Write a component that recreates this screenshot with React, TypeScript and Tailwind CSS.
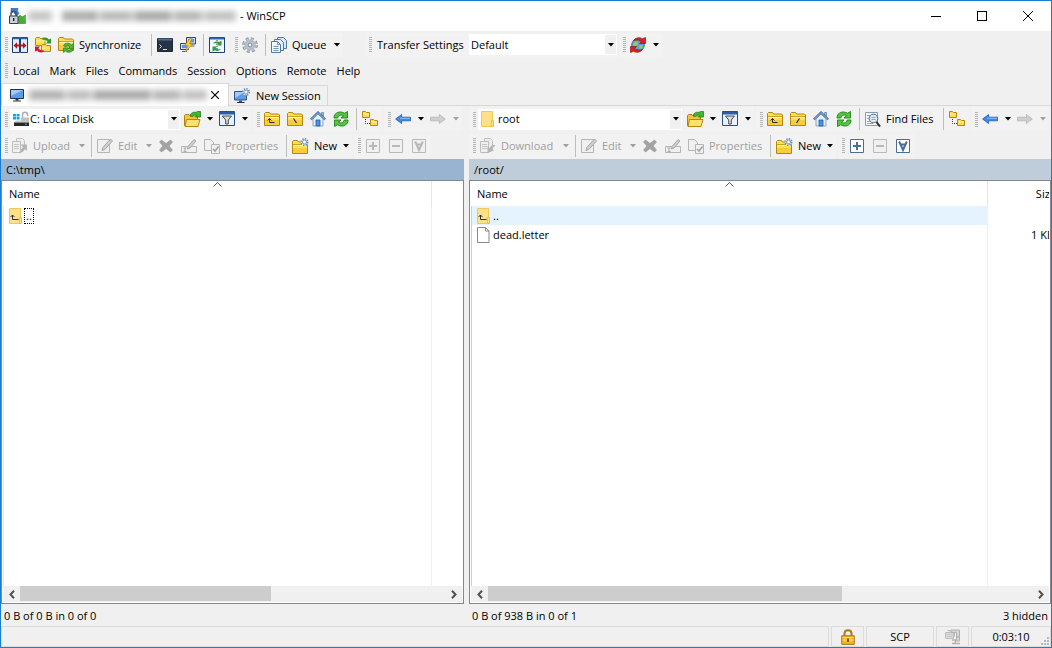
import type { ReactNode } from 'react'

type IconProps = { children: ReactNode; w?: number }

function Svg({ children, w = 16 }: IconProps) {
  return (
    <svg width={w} height="16" viewBox={`0 0 ${w} 16`} fill="none" className="shrink-0" aria-hidden="true">
      {children}
    </svg>
  )
}

// shared folder shape used by most toolbar icons
function Folder({ x = 0, y = 0, children }: { x?: number; y?: number; children?: ReactNode }) {
  return (
    <g transform={`translate(${x} ${y})`}>
      <path d="M.5 14.5v-12l1-1h4l1 1.5h8l1 1v10.5z" fill="#fbdf5e" stroke="#b8860b" />
      <path d="M1 9h14v5H1z" fill="#f6cd3c" />
      <path d="M1.500 6.500h13" stroke="#fff6c0" />
      <path d="M1 5.500h14" stroke="#d0a020" />
      {children}
    </g>
  )
}

const FolderUp = () => (
  <Svg>
    <Folder>
      <path d="M5.500 7.500v4h5M3.500 9.500l2-2 2 2" stroke="#2b2b2b" />
    </Folder>
  </Svg>
)
const FolderRoot = ({ slash }: { slash: string }) => (
  <Svg>
    <Folder>
      <path d={slash === '/' ? 'M9.500 7.500l-3 4.500' : 'M6.500 7.500l3 4.500'} stroke="#2b2b2b" strokeWidth="1.200" />
    </Folder>
  </Svg>
)
const SmallFolder = ({ x, y }: { x: number; y: number }) => (
  <g transform={`translate(${x} ${y})`}>
    <path d="M.5 6.500v-6h3l1 1h3v5z" fill="#fbdc55" stroke="#b8860b" />
    <path d="M1 3h6" stroke="#fff2a8" />
  </g>
)
const Tree = () => (
  <Svg>
    <SmallFolder x={0} y={0} />
    <SmallFolder x={8} y={8} />
    <path d="M3.500 8v4.500H8" stroke="#333" strokeDasharray="1 1" />
  </Svg>
)
const Home = () => (
  <Svg>
    <path d="M3 7.500v7.500h10V7.500L8 3z" fill="#e3effa" stroke="#8aa3bd" />
    <path d="M11.500 1.500h2v4l-2-2z" fill="#9db9d8" stroke="#4a6f9e" strokeWidth=".6" />
    <path d="M.8 8.500L8 1.500l7.200 7" stroke="#3f689c" strokeWidth="2.200" />
    <path d="M1.200 8.200L8 1.700l6.800 6.500" stroke="#a9c6e6" strokeWidth=".9" />
    <path d="M6 9h4v6H6z" fill="#4c8fe6" stroke="#245aa8" strokeWidth=".8" />
  </Svg>
)
const Refresh = () => (
  <Svg>
    <path d="M1 7C1 2.500 5 .2 9 1.200l2.500 1L14.500.5V7H8l2.500-2.300C8 3.500 5.500 4 4.800 7z" fill="#52c73f" stroke="#21801a" strokeWidth=".9" />
    <path d="M15 9c0 4.500-4 6.800-8 5.800l-2.500-1-3 1.700V9H8l-2.500 2.300C8 12.500 10.500 12 11.200 9z" fill="#52c73f" stroke="#21801a" strokeWidth=".9" />
  </Svg>
)
const OpenFolder = () => (
  <Svg w={17}>
    <path d="M.5 14.500v-10l1-1h3.500l1.500 1.500h7v9.500z" fill="#f0c63a" stroke="#b08010" />
    <path d="M1 15.500l1.500-7h13.500l-2 7z" fill="#fde272" stroke="#b8860b" />
    <path d="M6 5c.5-3 3.500-4.500 6-3.500L13.500.3l3 .2v5.500h-5l1.500-1.500c-2-.8-3.500-.5-4.500 1z" fill="#43b834" stroke="#21801a" strokeWidth=".8" />
  </Svg>
)
const Filter = () => (
  <Svg>
    <path d="M.5.500h15v14H.5z" fill="#e9f1fb" stroke="#274f8a" />
    <path d="M1 1h14v2.500H1z" fill="#2a5caa" />
    <path d="M3.500 5h9L9.300 9v4H6.700V9z" fill="#d8dce0" stroke="#4d4d4d" />
  </Svg>
)
const BackArrow = () => (
  <Svg>
    <path d="M.6 8l6-4.500v2.700h8.900v3.600H6.600v2.700z" fill="#3f8bea" stroke="#1e5db3" strokeWidth=".8" />
    <path d="M5 7.300h10" stroke="#8dbcf5" />
  </Svg>
)
const ForwardArrow = () => (
  <Svg>
    <path d="M15.400 8l-6-4.500v2.700H.5v3.600h8.900v2.700z" fill="#cfcfcf" stroke="#b5b5b5" strokeWidth=".8" />
  </Svg>
)
const Boxed = ({ kind, disabled }: { kind: 'plus' | 'minus' | 'all'; disabled?: boolean }) => {
  const c = disabled ? '#b8b8b8' : '#4a6d9c'
  return (
    <Svg>
      <path d="M1.500 1.500h13v13h-13z" fill={disabled ? '#f0f0f0' : '#fff'} stroke={c} />
      {kind !== 'all' && <path d="M4 8h8" stroke={c} strokeWidth="2" />}
      {kind === 'plus' && <path d="M8 4v8" stroke={c} strokeWidth="2" />}
      {kind === 'all' && <path d="M4.200 3.500L8 12l3.800-8.500M5.500 6.500h5" stroke={c} strokeWidth="2" />}
    </Svg>
  )
}
const Gear = () => (
  <Svg>
    <circle cx="8" cy="8" r="6.300" stroke="#7e8b98" strokeWidth="3" strokeDasharray="2.800 2.150" />
    <circle cx="8" cy="8" r="6.300" stroke="#b9c3cd" strokeWidth="1.500" strokeDasharray="2.800 2.150" />
    <circle cx="8" cy="8" r="4.300" fill="#c8d0d8" stroke="#b4bec8" strokeWidth="2.500" />
    <circle cx="8" cy="8" r="2" fill="#f0f0f0" stroke="#76828f" />
  </Svg>
)
const TinyGear = ({ x, y }: { x: number; y: number }) => (
  <g transform={`translate(${x} ${y})`}>
    <circle cx="4" cy="4" r="3.200" stroke="#6487b0" strokeWidth="1.600" strokeDasharray="1.300 1.200" />
    <circle cx="4" cy="4" r="2" fill="#f3f7fb" stroke="#7d9cc0" />
  </g>
)
const NewFolder = () => (
  <Svg w={17}>
    <Folder y={1} />
    <circle cx="12.500" cy="4" r="3.500" fill="#f0f0f0" />
    <TinyGear x={8.500} y={0} />
  </Svg>
)
const Monitor = () => (
  <Svg>
    <path d="M1.500 2.500h13v9h-13z" fill="#5b9bea" stroke="#24303f" />
    <path d="M2 3h12L2 9z" fill="#a3caf7" />
    <path d="M6.500 12h3v1.500h-3z" fill="#24303f" />
    <path d="M4 14h8" stroke="#24303f" />
  </Svg>
)
const NewSessionIcon = () => (
  <Svg>
    <path d="M.5 3.500h12v8.500H.5z" fill="#5b9bea" stroke="#33557f" />
    <path d="M1 4h10L1 10z" fill="#a3caf7" />
    <path d="M5 12.500h3v1.500H5z" fill="#33557f" />
    <path d="M3 14.500h7.500" stroke="#24303f" />
    <circle cx="12" cy="4" r="3.600" fill="#f0f0f0" />
    <TinyGear x={8} y={0} />
  </Svg>
)
const Compare = () => (
  <Svg>
    <path d="M.5.500h7v15h-7zM8.500.500h7v15h-7z" fill="#dfecfb" stroke="#1f3f6e" />
    <path d="M1 1.500h6M9 1.500h6" stroke="#2f67b5" strokeWidth="1.500" />
    <path d="M1.500 8.500L5 5.200v2.300h6V5.200l3.500 3.300L11 11.800V9.500H5v2.300z" fill="#b3151b" />
  </Svg>
)
const SyncBrowse = () => (
  <Svg>
    <path d="M.5 8.500v-7l1-1h3l1 1h4.500v7z" fill="#fbdc55" stroke="#b8860b" />
    <path d="M1 4h9" stroke="#fff2a8" />
    <path d="M6.500 14.500v-6l1-1h3l1 1h4v6z" fill="#fbdc55" stroke="#b8860b" />
    <path d="M7 11h8" stroke="#fff2a8" />
    <path d="M7.500 1c3-1.200 5.500 0 6.200 1.500L16 1.500V6.500h-5l1.500-1.800C11.500 3 10 2.500 7.500 3z" fill="#2d9a2b" />
    <path d="M8.500 15c-3 1.200-5.500 0-6.200-1.500L0 14.500V9.500h5l-1.500 1.800c1 1.700 2.500 2.200 5 1.700z" fill="#cf1d1d" />
  </Svg>
)
const Synchronize = () => (
  <Svg>
    <Folder y={-1} />
    <path d="M5.500 8.500c1.500-3 6-3 8-.5l2-1.500v5h-5l1.500-1.500c-1.500-1.300-3-1.500-4.500 0z" fill="#4cb83c" stroke="#21801a" strokeWidth=".7" />
    <path d="M15.500 12.500c-1.500 3.200-6 3.500-8 1.500L5.500 15.500V11h5L9 12.500c1.500 1.200 3 .8 4 0z" fill="#4cb83c" stroke="#21801a" strokeWidth=".7" />
  </Svg>
)
const Terminal = () => (
  <Svg>
    <path d="M.5 1.500h15v13H.5z" fill="#273445" stroke="#1c2836" />
    <path d="M1 2.500h14" stroke="#4f6e92" strokeWidth="2" />
    <path d="M2.500 7.500l2 2-2 2M6 12.500h4" stroke="#d5dde6" />
  </Svg>
)
const Putty = () => (
  <Svg>
    <path d="M6.500.500h9v6.500h-9zM.5 6.500h8v6h-8z" fill="#cfe0f3" stroke="#34455a" />
    <path d="M8 2h6v3.500H8zM2 8h5v3H2z" fill="#5f97dd" />
    <path d="M2 14.500h5M10.500 9h4" stroke="#53606e" />
    <path d="M10.500 1L4.500 8.500H8L5.500 15l7-8H9.500l2.500-6z" fill="#ffd42e" stroke="#b98310" strokeWidth=".7" />
  </Svg>
)
const KeepUpToDate = () => (
  <Svg>
    <path d="M.5.500h15v15H.5z" fill="#f4f9ff" stroke="#1f3f6e" />
    <path d="M1 1.500h14" stroke="#2f67b5" strokeWidth="2" />
    <path d="M8 3v12" stroke="#1f3f6e" strokeDasharray="1 1" />
    <path d="M4 6.500c1.500-2 4-2.500 6-1.500l2.500-1.500v5H8l1.500-1.500C8 6 6 6 4 6.500z" fill="#2f9e35" />
    <path d="M12 12c-1.500 2-4 2.200-6 1.200l-2.500 1.300V9.500H8L6.500 11c1.500 1.300 3.500 1.500 5.500 1z" fill="#2f9e35" />
  </Svg>
)
const QueueIcon = () => (
  <Svg>
    <path d="M6.500.500h6l3 3v8h-9z" fill="#d9e8f8" stroke="#54779f" />
    <path d="M3.500 2.500h6l3 3v8h-9z" fill="#e4effa" stroke="#54779f" />
    <path d="M.5 4.500h6l3 3v8h-9z" fill="#f4f9ff" stroke="#54779f" />
    <path d="M6.500 4.500v3h3M2.500 9.500h5M2.500 11.500h5M2.500 13.500h5" stroke="#6e93bd" />
  </Svg>
)
const Reconnect = () => (
  <Svg>
    <circle cx="8" cy="8" r="6.300" fill="#5d9fe4" stroke="#3a70b0" />
    <path d="M3.500 6c1-1.500 3-2 4-1s0 3-1 3.500S4 11 3 10zM9 9c2-1.500 4-1 4 .5S11 12.500 10 12.500z" fill="#86cf70" />
    <path d="M3.500 3.500C6 .2 10 .2 12.500 1.800L15.500.500V6.500h-6L11.500 4.500C9.500 3 7 2.500 3.500 3.500z" fill="#d8231f" stroke="#8e1512" strokeWidth=".7" />
    <path d="M12.500 12.500C10 15.800 6 15.800 3.500 14.200L.5 15.500V9.500h6L4.500 11.500c2 1.500 4.500 2 8 1z" fill="#d8231f" stroke="#8e1512" strokeWidth=".7" />
  </Svg>
)
const Drive = () => (
  <Svg>
    <path d="M0 3h3v2.500H0zM3.600 3h3v2.500h-3zM0 6h3v2.500H0zM3.600 6h3v2.500h-3z" fill="#11a4e6" />
    <path d="M9.500 7V3.500c0-3 5-3 5 0V5" stroke="#a7adb3" strokeWidth="1.500" />
    <path d="M8 6.500h8V11H8z" fill="#bcc2c8" />
    <path d="M3 9.500h10l3 2H1z" fill="#c5c9cd" />
    <path d="M1 11.500h15v3.500H1z" fill="#26292c" />
    <path d="M12 13.200h2" stroke="#39d353" />
  </Svg>
)
const PlainFolder = ({ up }: { up?: boolean }) => (
  <svg width="13" height="16" viewBox="0 0 13 16" fill="none" className="shrink-0" aria-hidden="true">
    <path d="M.5.500h11v15H.5z" fill="#ffe08a" stroke="#f0c955" />
    <path d="M10.500 9.500h2v6h-2z" fill="#ffe391" stroke="#ebc145" />
    {up && <path d="M3.500 7v4.500h6M1.500 9l2-2 2 2" stroke="#333" />}
  </svg>
)
const FileIcon = () => (
  <svg width="13" height="16" viewBox="0 0 13 16" fill="none" className="shrink-0" aria-hidden="true">
    <path d="M.5.500h8l3.500 3.500v11.500H.5z" fill="#fff" stroke="#8a8a8a" />
    <path d="M8.500.500v3.500H12" stroke="#8a8a8a" />
  </svg>
)
const Transfer = ({ down }: { down?: boolean }) => (
  <Svg>
    <path d="M4.500.500h6l2 2v9h-8z" fill="#ededed" stroke="#c2c2c2" />
    <path d="M.5 3.500h8v11h-8z" fill="#f0f0f0" stroke="#bcbcbc" />
    <path d="M2 6.500h5M2 8.500h5M2 10.500h5" stroke="#c6c6c6" />
    {down ? (
      <path d="M15.500 7.500L12 10.500l2 2-6.500 2.500V8l2 2 3-3.500z" fill="#b5b5b5" />
    ) : (
      <path d="M8.500 6.500H15v6.500l-2-2c-1 2-3 3.800-6 4.500 1.500-2 2.500-4.500 4-6.500z" fill="#b5b5b5" />
    )}
  </Svg>
)
const Edit = () => (
  <Svg>
    <path d="M.5 1.500h12v13H.5z" fill="#f0f0f0" stroke="#b5b5b5" />
    <path d="M5 12.500l.8-3L13.500 1l2 2-7.700 8.500z" fill="#cfcfcf" stroke="#a9a9a9" />
  </Svg>
)
const Delete = () => (
  <Svg>
    <path d="M1.500 4l2-2L8 5.500 12.500 2l2 2L11 8l3.500 4-2 2L8 10.500 3.500 14l-2-2L5 8z" fill="#a3a3a3" stroke="#949494" strokeWidth=".6" />
  </Svg>
)
const Rename = () => (
  <Svg>
    <path d="M.5 8.500h15v6H.5z" fill="#f0f0f0" stroke="#b5b5b5" />
    <path d="M2.500 10h3M2.500 13.500h3M4 10v3.500" stroke="#a9a9a9" />
    <path d="M6.500 11l.5-2.500 6-7 2 1.500-6 7z" fill="#cfcfcf" stroke="#a9a9a9" />
  </Svg>
)
const Properties = () => (
  <Svg>
    <path d="M.5 1.500h6l3 3v8h-9z" fill="#f0f0f0" stroke="#b5b5b5" />
    <path d="M7.500 6.500h8v9h-8z" fill="#f0f0f0" stroke="#b5b5b5" />
    <path d="M9 11l2 2 3.500-4.500" stroke="#a3a3a3" strokeWidth="1.600" />
  </Svg>
)
const Find = () => (
  <Svg>
    <path d="M.5 1.500h12v13H.5z" fill="#f4f9ff" stroke="#7d9cc0" />
    <path d="M2 4.500h3M2 7.500h2M2 10.500h3M2 12.500h6" stroke="#8aa8cc" />
    <circle cx="8.500" cy="7.500" r="4.300" fill="#dcebf9" stroke="#5c6b7a" />
    <path d="M6.500 6.500h4M6.500 8.500h4" stroke="#89a9cf" />
    <path d="M11.500 11l3.500 4.500" stroke="#2d2d2d" strokeWidth="2" />
  </Svg>
)
const AppIcon = () => (
  <Svg w={17}>
    <path d="M2 .3h7L8.500 3 10 5.500 7.500 8 4.500 4 2 5z" fill="#2f7fd6" stroke="#1a4f94" strokeWidth=".5" />
    <path d="M8 11l3-4 2 2 3.500-2v8.500H8l2-2z" fill="#45b02f" stroke="#1f6b14" strokeWidth=".5" />
    <path d="M2 8V6c0-3.500 5-3.500 5 0v2" stroke="#4a5058" strokeWidth="1.400" />
    <path d="M.5 8h8.500v7.500H.5z" fill="#c9d0d8" stroke="#39424c" />
    <path d="M4.700 10v3" stroke="#20262c" strokeWidth="1.400" />
  </Svg>
)
const Padlock = () => (
  <Svg w={14}>
    <path d="M3.500 7V4.500c0-4.500 7-4.500 7 0V7" stroke="#b07a10" strokeWidth="2" />
    <path d="M.8 6.800h12.400v8.500H.8z" fill="#f5b82e" stroke="#a8700b" />
    <path d="M1.500 8.500h11M1.500 11h11" stroke="#ffdc78" />
    <path d="M7 9.500v3.500" stroke="#5c3c05" strokeWidth="1.500" />
  </Svg>
)
const Clamp = () => (
  <Svg>
    <path d="M.5 3.500h8v6h-8zM2.500 1.500h7v6" stroke="#bdbdbd" fill="#dcdcdc" />
    <path d="M1.500 5.500h6M1.500 7.500h6" stroke="#c6c6c6" />
    <path d="M6 1h8.500v7h-3V3.500H6z" fill="#d4d4d4" stroke="#b2b2b2" />
    <path d="M11.500 8h3v4h-3z" fill="#d4d4d4" stroke="#b2b2b2" />
    <path d="M7 11h5M7 14.500h8M10.500 11v3" stroke="#b2b2b2" strokeWidth="1.500" />
  </Svg>
)

function Caret({ muted }: { muted?: boolean }) {
  return (
    <svg width="6" height="4" viewBox="0 0 6 4" className="shrink-0" aria-hidden="true">
      <path d="M0 0h6L3 3.500z" fill={muted ? '#a0a0a0' : '#000'} />
    </svg>
  )
}

const Grip = () => (
  <div className="flex w-2 shrink-0 flex-col gap-px pl-1">
    {[0, 1, 2, 3, 4, 5, 6, 7].map((i) => (
      <i key={i} className="h-px w-[3px] bg-[#b4b4b4]" />
    ))}
  </div>
)

const Sep = () => <div className="mr-0.5 ml-[3px] h-[22px] w-px shrink-0 bg-[#bdbdbd]" />

type BtnProps = { icon: ReactNode; label: string; text?: boolean; drop?: boolean; disabled?: boolean; className?: string }

function Btn({ icon, label, text, drop, disabled, className = 'w-[23px]' }: BtnProps) {
  return (
    <button
      type="button"
      aria-label={label}
      disabled={disabled}
      className={`flex h-6 shrink-0 items-center pl-[3px] whitespace-nowrap hover:bg-[#e5f1fb] disabled:text-[#a0a0a0] ${className}`}
    >
      {icon}
      {text && <span className="ml-[5px]">{label}</span>}
      {drop && (
        <span className="ml-auto pr-[3px]">
          <Caret muted={disabled} />
        </span>
      )}
    </button>
  )
}

const Group = ({ children }: { children: ReactNode }) => (
  <div className="mr-0.5 flex shrink-0 items-center bg-[#f2f2f2]">
    <Grip />
    {children}
  </div>
)

type ComboProps = { label: string; value: string; icon?: ReactNode; width: string; pad: string }

function Combo({ label, value, icon, width, pad }: ComboProps) {
  return (
    <div className={`relative flex h-[21px] shrink-0 items-center bg-white ${width}`}>
      {icon && <span className="pointer-events-none absolute left-[3px]">{icon}</span>}
      <select aria-label={label} className={`h-full w-full appearance-none outline-none ${pad}`}>
        <option>{value}</option>
      </select>
      <span className="pointer-events-none absolute top-px right-px bottom-px flex w-[11px] items-center justify-center bg-[#f0f0f0]">
        <Caret />
      </span>
    </div>
  )
}

function PaneToolbars({ remote }: { remote?: boolean }) {
  return (
    <>
      <div className="flex h-[26px] items-center">
        <Group>
          <div className={remote ? 'mr-0.5 ml-px' : 'mr-px ml-px'}>
            {remote ? (
              <Combo label="Remote directory" value="root" icon={<PlainFolder />} width="w-[204px]" pad="pl-5" />
            ) : (
              <Combo label="Drive" value="C: Local Disk" icon={<Drive />} width="w-[170px]" pad="pl-5" />
            )}
          </div>
          <Btn icon={<OpenFolder />} label="Open directory" drop className="w-[35px]" />
          <Btn icon={<Filter />} label="Filter" drop className="w-[35px]" />
        </Group>
        <Group>
          <Btn icon={<FolderUp />} label="Parent directory" />
          <Btn icon={<FolderRoot slash={remote ? '/' : '\\'} />} label="Root directory" />
          <Btn icon={<Home />} label="Home directory" />
          <Btn icon={<Refresh />} label="Refresh" />
          <Sep />
          {remote && (
            <>
              <Btn icon={<Find />} label="Find Files" text className="w-[78px]" />
              <Sep />
            </>
          )}
          <Btn icon={<Tree />} label="Tree" />
        </Group>
        <Group>
          <Btn icon={<BackArrow />} label="Back" drop className="w-[35px]" />
          <Btn icon={<ForwardArrow />} label="Forward" drop disabled className="w-[35px]" />
        </Group>
      </div>
      <div className="flex h-[27px] items-center">
        <Group>
          {remote ? (
            <Btn icon={<Transfer down />} label="Download" text drop disabled className="w-[95px]" />
          ) : (
            <Btn icon={<Transfer />} label="Upload" text drop disabled className="w-[79px]" />
          )}
          <Sep />
          <Btn icon={<Edit />} label="Edit" text drop disabled className="w-[61px]" />
          <Btn icon={<Delete />} label="Delete" disabled />
          <Btn icon={<Rename />} label="Rename" disabled />
          <Btn icon={<Properties />} label="Properties" text disabled className="w-[82px]" />
          <Sep />
          <Btn icon={<NewFolder />} label="New" text drop className="w-[63px]" />
        </Group>
        <Group>
          <Btn icon={<Boxed kind="plus" disabled={!remote} />} label="Select files" disabled={!remote} />
          <Btn icon={<Boxed kind="minus" disabled />} label="Unselect files" disabled />
          <Btn icon={<Boxed kind="all" disabled={!remote} />} label="Select all" disabled={!remote} />
        </Group>
      </div>
    </>
  )
}

const ScrollArrow = ({ right }: { right?: boolean }) => (
  <button type="button" aria-label={right ? 'Scroll right' : 'Scroll left'} className="flex h-4 w-[17px] shrink-0 items-center justify-center">
    <svg width="6" height="9" viewBox="0 0 6 9" fill="none" aria-hidden="true">
      <path d={right ? 'M1 .8l3.500 3.700L1 8.200' : 'M5 .8L1.500 4.500 5 8.200'} stroke="#505050" strokeWidth="2" />
    </svg>
  </button>
)

const ScrollBar = ({ thumb }: { thumb: string }) => (
  <div className="mb-px flex h-4 shrink-0 bg-[#f0f0f0]">
    <ScrollArrow />
    <div className="min-w-0 flex-1">
      <div className={`h-[15px] bg-[#cdcdcd] ${thumb}`} />
    </div>
    <ScrollArrow right />
  </div>
)

const files = [
  { name: '..', size: '', up: true },
  { name: 'dead.letter', size: '1 KB', up: false },
]

function FileList({ remote }: { remote?: boolean }) {
  const rows = remote ? files : files.slice(0, 1)
  const line = remote ? 'border-l border-l-[#b5d5f5]' : 'border-l border-l-[#dbe9f8]'
  return (
    <div className="flex min-h-0 flex-1 flex-col border border-[#828790] bg-white px-px">
      <div className="min-h-0 flex-1 overflow-hidden">
        <table className={`h-full table-fixed border-separate border-spacing-0 ${remote ? 'w-[591px]' : 'w-full'}`}>
          <colgroup>
            <col className={remote ? 'w-[517px]' : ''} />
            <col className={remote ? '' : 'w-[30px]'} />
          </colgroup>
          <thead>
            <tr className="h-[25px]">
              <th className="relative border-r border-[#e5e5e5] p-0 pl-1.5 text-left font-normal">
                Name
                <svg width="9" height="5" viewBox="0 0 9 5" fill="none" className="absolute top-px left-1/2 -ml-1" aria-hidden="true">
                  <path d="M.5 4.500l4-4 4 4" stroke="#5a5a5a" />
                </svg>
              </th>
              <th className="p-0 pr-1.5 text-right font-normal">{remote ? 'Size' : ''}</th>
            </tr>
          </thead>
          <tbody>
            {rows.map((f) => (
              <tr key={f.name} className="h-[19px]">
                <td className={`border-r border-r-[#e8f1fb] p-0 pl-[5px] ${line} ${remote && f.up ? 'bg-[#e5f3ff]' : ''}`}>
                  <span className="flex h-[19px] items-center gap-[3px]">
                    {f.up ? <PlainFolder up /> : <FileIcon />}
                    <span className={remote ? '' : '-ml-px h-4 border border-dotted border-black px-px leading-[14px]'}>{f.name}</span>
                  </span>
                </td>
                <td className="p-0 pr-2 text-right">{f.size}</td>
              </tr>
            ))}
            <tr>
              <td className={`border-r border-r-[#e8f1fb] p-0 ${line}`} />
              <td className="p-0" />
            </tr>
          </tbody>
        </table>
      </div>
      <ScrollBar thumb={remote ? 'w-[65%]' : 'w-[59%]'} />
    </div>
  )
}

function Pane({ remote }: { remote?: boolean }) {
  return (
    <section className={`flex min-w-0 flex-col overflow-hidden ${remote ? 'flex-[582]' : 'flex-[463]'}`}>
      <PaneToolbars remote={remote} />
      <div className={`flex h-[21px] shrink-0 items-center pl-[5px] ${remote ? 'bg-[#bfcddb]' : 'bg-[#99b4d1]'}`}>
        {remote ? '/root/' : 'C:\\tmp\\'}
      </div>
      <FileList remote={remote} />
      <div className="flex h-[22px] shrink-0 items-center justify-between px-[3px] pt-0.5">
        <span>{remote ? '0 B of 938 B in 0 of 1' : '0 B of 0 B in 0 of 0'}</span>
        {remote && <span>3 hidden</span>}
      </div>
    </section>
  )
}

// host name is hidden behind a smudge
const Redacted = ({ width, parts }: { width: string; parts: string[] }) => (
  <span className={`flex h-3 items-center gap-0.5 blur-[3px] ${width}`} aria-hidden="true">
    {parts.map((p, i) => (
      <i key={i} className={`h-2.5 ${p}`} />
    ))}
  </span>
)

const menus = ['Local', 'Mark', 'Files', 'Commands', 'Session', 'Options', 'Remote', 'Help']

export default function App() {
  return (
    <div className="flex h-screen flex-col overflow-hidden border border-[#1a7fd4] bg-[#f0f0f0] font-['Open_Sans','Noto_Sans',sans-serif] text-[11px] leading-4 text-black">
      <header className="flex h-[30px] shrink-0 items-center bg-white pl-2">
        <AppIcon />
        <div className="ml-0.5 flex items-center gap-1">
          <Redacted
            width="w-[208px]"
            parts={['w-6 bg-[#c4c4c4]', 'ml-2 w-9 bg-[#ababab]', 'w-8 bg-[#b8b8b8]', 'flex-1 bg-[#a8a8a8]', 'w-7 bg-[#b4b4b4]', 'w-8 bg-[#c0c0c0]']}
          />
          <h1>- WinSCP</h1>
        </div>
        <div className="ml-auto flex">
          <button type="button" aria-label="Minimize" className="flex h-7 w-[46px] items-center justify-center">
            <i className="h-px w-2.5 bg-black" />
          </button>
          <button type="button" aria-label="Maximize" className="flex h-7 w-[46px] items-center justify-center">
            <i className="size-2.5 border border-black" />
          </button>
          <button type="button" aria-label="Close" className="flex h-7 w-[46px] items-center justify-center">
            <svg width="10" height="10" viewBox="0 0 10 10" aria-hidden="true">
              <path d="M0 0l10 10M10 0L0 10" stroke="#000" />
            </svg>
          </button>
        </div>
      </header>

      <div className="flex h-[27px] shrink-0 items-center">
        <Group>
          <Btn icon={<Compare />} label="Compare directories" />
          <Btn icon={<SyncBrowse />} label="Synchronize browsing" />
          <Btn icon={<Synchronize />} label="Synchronize" text className="w-[93px]" />
          <Sep />
          <Btn icon={<Terminal />} label="Open terminal" />
          <Btn icon={<Putty />} label="Open in PuTTY" />
          <Sep />
          <Btn icon={<KeepUpToDate />} label="Keep remote directory up to date" />
        </Group>
        <Group>
          <Btn icon={<Gear />} label="Preferences" />
          <Sep />
          <Btn icon={<QueueIcon />} label="Queue" text drop className="w-[75px]" />
        </Group>
        <div className="ml-5 flex">
          <Group>
            <label className="ml-1 flex items-center">
              <span className="w-[92px] whitespace-nowrap">Transfer Settings</span>
              <Combo label="Transfer Settings" value="Default" width="w-[148px]" pad="pl-0.5" />
            </label>
          </Group>
          <Group>
            <Btn icon={<Reconnect />} label="Reconnect" drop className="w-[35px]" />
          </Group>
        </div>
      </div>

      <nav className="flex h-[25px] shrink-0 items-center">
        <Grip />
        <div className="flex gap-0.5">
          {menus.map((m) => (
            <button key={m} type="button" className="px-1 hover:bg-[#e5f1fb]">
              {m}
            </button>
          ))}
        </div>
      </nav>

      <div className="flex h-[23px] shrink-0 items-end border-b border-[#d9d9d9]">
        <div className="-mb-px flex h-[23px] w-[228px] items-center gap-1 border border-b-0 border-[#d9d9d9] bg-white pl-[7px]">
          <Monitor />
          <Redacted
            width="w-[178px]"
            parts={['w-9 bg-[#b0b0b0]', 'w-6 bg-[#bcbcbc]', 'flex-1 bg-[#a8a8a8]', 'w-7 bg-[#b4b4b4]', 'w-6 bg-[#c0c0c0]']}
          />
          <button type="button" aria-label="Close tab">
            <svg width="8" height="8" viewBox="0 0 8 8" aria-hidden="true">
              <path d="M0 0l8 8M8 0L0 8" stroke="#000" strokeWidth="1.200" />
            </svg>
          </button>
        </div>
        <button type="button" className="-mb-px flex h-[21px] w-[99px] items-center gap-1.5 border border-l-0 border-[#d9d9d9] pl-[5px]">
          <NewSessionIcon />
          <span className="whitespace-nowrap">New Session</span>
        </button>
      </div>

      <main className="flex min-h-0 flex-1 gap-[5px]">
        <Pane />
        <Pane remote />
      </main>

      <footer className="flex h-[21px] shrink-0 gap-0.5">
        <div className="flex-1 border border-[#dcdcdc]" />
        <div className="flex w-[33px] items-center justify-center border border-[#dcdcdc]">
          <Padlock />
        </div>
        <div className="flex w-[68px] items-center justify-center border border-[#dcdcdc]">SCP</div>
        <div className="flex w-[33px] items-center justify-center border border-[#dcdcdc]">
          <Clamp />
        </div>
        <div className="relative flex w-20 items-center justify-center border border-[#dcdcdc]">
          0:03:10
          <svg width="9" height="9" viewBox="0 0 9 9" className="absolute right-0 bottom-0" aria-hidden="true">
            <path d="M6 0h2v2H6zM3 3h2v2H3zM6 3h2v2H6zM0 6h2v2H0zM3 6h2v2H3zM6 6h2v2H6z" fill="#b8b8b8" />
          </svg>
        </div>
      </footer>
    </div>
  )
}
